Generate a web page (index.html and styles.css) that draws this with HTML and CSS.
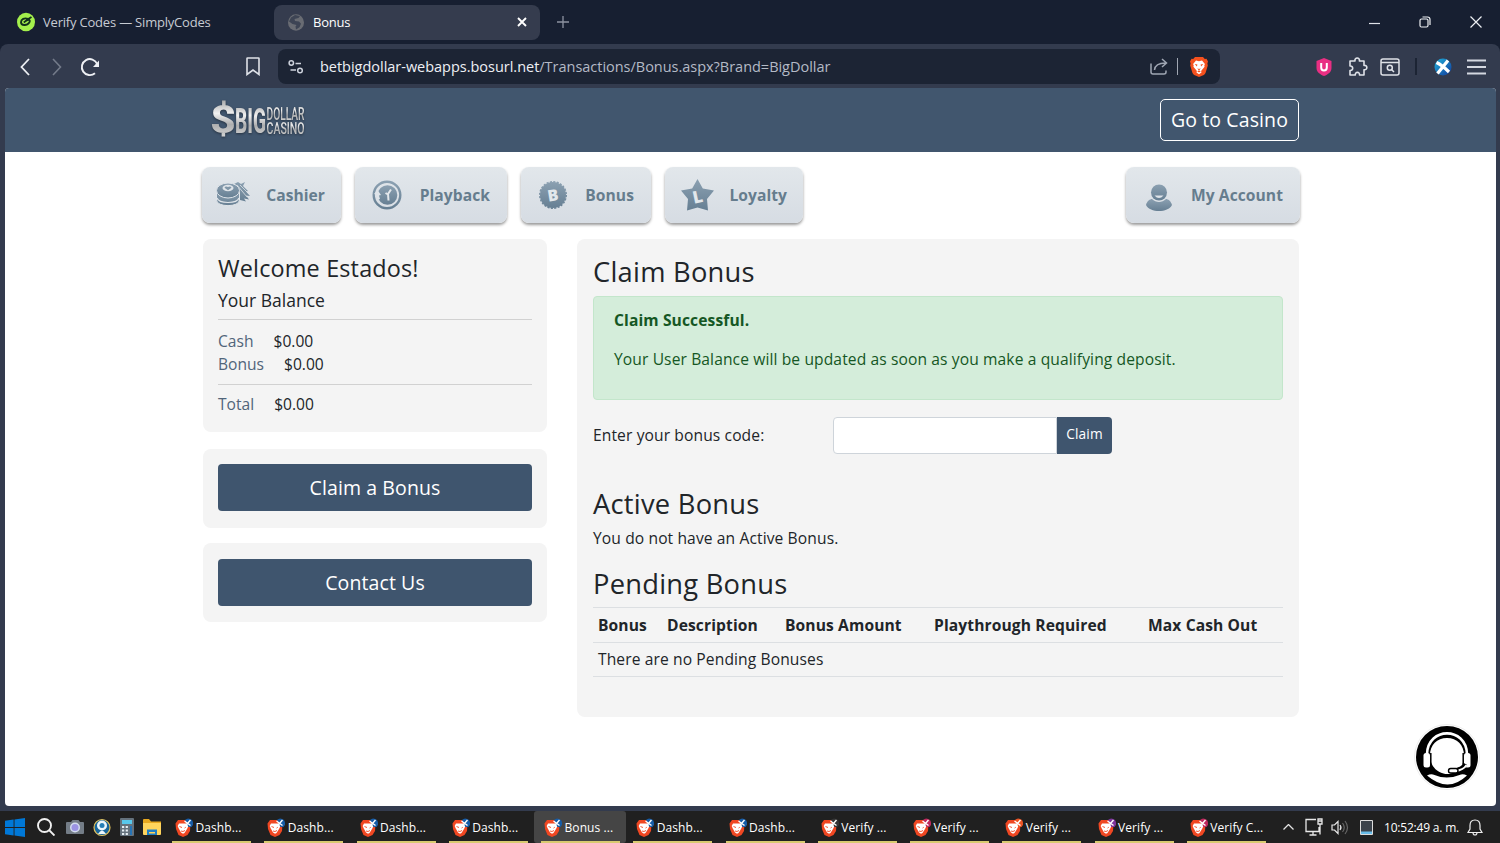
FILE: index.html
```html
<!DOCTYPE html>
<html lang="en">
<head>
  <meta charset="UTF-8" />
  <meta name="viewport" content="width=device-width, initial-scale=1.0"/>
  <title>Bonus</title>
  <link rel="stylesheet" href="styles.css">
</head>
<body>

  <!-- Shared icons -->
  <svg class="defs" width="0" height="0">
    <defs>
      <linearGradient id="silver" x1="0" y1="0" x2="0" y2="1">
        <stop offset="0" stop-color="#9c9e9f"/>
        <stop offset=".35" stop-color="#f1f1f1"/>
        <stop offset=".6" stop-color="#adaeaf"/>
        <stop offset="1" stop-color="#e2e2e2"/>
      </linearGradient>
      <linearGradient id="steel" x1="0" y1="0" x2="0" y2="1">
        <stop offset="0" stop-color="#8ba0b1"/>
        <stop offset="1" stop-color="#667f93"/>
      </linearGradient>
      <linearGradient id="blue" x1="0" y1="0" x2="1" y2="1">
        <stop offset="0" stop-color="#21b3dc"/>
        <stop offset="1" stop-color="#113a9c"/>
      </linearGradient>
      <symbol id="lion" viewBox="0 0 18 20">
        <path fill="#f4511e" d="M5 0h8l1.800 2 1.700-.2L18 4.600l-.6 1.800.4 2.200-2.200 7.200c-.3 1-1 1.600-1.800 2.200L9 20l-4.800-2C3.400 17.400 2.700 16.800 2.400 15.800L.2 8.600.6 6.400 0 4.600l1.500-2.800 1.700.2z"/>
        <path fill="#fff" d="M6 3.600l3 .6 3-.6 2.900 3.500-.6 1.400.3 1.300-3.500 4.100.4 1.500L9 17.300l-2.500-1.900.4-1.500L3.400 9.800l.3-1.300-.6-1.400z"/>
        <path fill="#f4511e" d="M4.700 7l2.700.6-.5 2zM13.300 7l-2.700.6.5 2zM7.300 11.300L9 12l1.700-.7L9 13.700zM7.200 14.300L9 13.500l1.800.8L9 15.400z"/>
      </symbol>
      <symbol id="task" viewBox="0 0 18 19">
        <path fill="#f04722" d="M3 2h9l3.500 3.500L15 13l-2.500 4L8 19l-4.500-2L1 11 .5 5.500z"/>
        <path fill="#fff" d="M4 5.500h8l1.500 2.500-1.500 3-2.500 4-1.500.8-2-1.300-2.500-4.500-.8-2z"/>
        <path stroke="#f04722" stroke-width=".9" fill="none" d="M4.500 8.500l2.500 1M11 9l-2 1M6 13l2 .5 2-1"/>
        <path fill="currentColor" d="M10 2Q13-1 17 2q2.500 4-.5 7L13.500 9z"/>
        <path stroke="#fff" stroke-width="1.400" d="M9.500 3l6 4.500M15.500 2L9 9.500"/>
      </symbol>
    </defs>
  </svg>

  <!-- Tabs -->
  <header class="tab-strip">
    <div class="tab">
      <svg class="tab-icon" width="18" height="20" viewBox="0 0 18 20"><ellipse cx="9" cy="10" rx="9" ry="9.300" fill="#a4f04c"/><path fill="none" stroke="#12301c" stroke-width="1.900" d="M11 6.800c-3.500-1.300-7 .4-7 3.400 0 3.500 6 4 8.300.3.900-1.400.4-2.700-.8-2.700-1.800 0-3.200 1.500-4.700 2.700M10.500 7.500l4-2.500"/></svg>
      <span class="tab-title">Verify Codes — SimplyCodes</span>
    </div>
    <div class="tab active">
      <svg class="tab-icon" width="16" height="17" viewBox="0 0 16 17"><ellipse cx="8" cy="8.500" rx="8" ry="8.300" fill="#696c73"/><path fill="#3d4454" d="M7 1l5 1-1.500 2-4 1 .5 2 4 .5 2 2.300-1.500 3.400-3.500 2.300-.5-3 1-1.500-4-1-3.500-2.500 2-4z"/></svg>
      <span class="tab-title">Bonus</span>
      <svg class="tab-close" width="10" height="10" viewBox="0 0 10 10"><path stroke="#fff" stroke-width="1.900" d="M1 1l8 8M9 1L1 9"/></svg>
    </div>
    <svg class="tab-new" width="12" height="12" viewBox="0 0 12 12"><path stroke="#8d93a0" stroke-width="1.300" d="M6 0v12M0 6h12"/></svg>
    <div class="window-buttons">
      <svg width="11" height="12" viewBox="0 0 11 12"><path stroke="#dfe2e8" stroke-width="1.200" d="M0 7.500h11"/></svg>
      <svg width="12" height="12" viewBox="0 0 12 12"><path fill="none" stroke="#eef0f4" stroke-width="1.200" d="M2.500 3h5q1.500 0 1.500 1.500v5q0 1.500-1.500 1.500h-5Q1 11 1 9.500v-5Q1 3 2.500 3zM3.500 1h5Q11 1 11 3.500v5.500"/></svg>
      <svg width="12" height="12" viewBox="0 0 12 12"><path stroke="#eef0f4" stroke-width="1.200" d="M.5.500l11 11M11.500.500l-11 11"/></svg>
    </div>
  </header>

  <!-- Toolbar -->
  <div class="toolbar">
    <div class="toolbar-left">
      <svg width="10" height="18" viewBox="0 0 10 18"><path fill="none" stroke="#eef0f4" stroke-width="1.800" d="M9 1L1.500 9 9 17"/></svg>
      <svg width="10" height="18" viewBox="0 0 10 18"><path fill="none" stroke="#747b8a" stroke-width="1.600" d="M1 1l7.500 8L1 17"/></svg>
      <svg class="reload" width="20" height="20" viewBox="0 0 20 20"><path fill="none" stroke="#eef0f4" stroke-width="1.900" d="M15 16.200A8 8 0 1 1 17.200 7"/><path fill="#eef0f4" d="M19 3.500v6.500h-6z"/></svg>
      <svg class="bookmark" width="14" height="19" viewBox="0 0 14 19"><path fill="none" stroke="#dfe2e8" stroke-width="1.600" d="M1.500 1h11q.5 0 .5.500V17.500L7 13l-6 4.500V1.500Q1 1 1.500 1z"/></svg>
    </div>
    <div class="address">
      <svg width="16" height="14" viewBox="0 0 16 14"><g fill="none" stroke="#cdd2dc" stroke-width="1.500"><circle cx="3.300" cy="3" r="2.200"/><path d="M7.500 3.500H13M2.500 10h5.500"/><circle cx="12" cy="10.500" r="2.300"/></g></svg>
      <span class="url">betbigdollar-webapps.bosurl.net<span class="path">/Transactions/Bonus.aspx?Brand=BigDollar</span></span>
      <svg class="share" width="18" height="17" viewBox="0 0 18 17"><path fill="none" stroke="#9fa6b3" stroke-width="1.500" d="M1 5.500V14q0 2 2 2h11q2 0 2-2v-1.500M4.500 12c.5-5 4-7 11-7M12 1l4.500 4L12 9"/></svg>
      <i class="divider"></i>
      <svg class="shield" width="18" height="20"><use href="#lion"/></svg>
    </div>
    <div class="toolbar-right">
      <svg width="16" height="18" viewBox="0 0 16 18"><path fill="#e92f83" d="M8 0l7.500 3v7c0 4-3.500 6.500-7.500 8-4-1.500-7.500-4-7.500-8V3z"/><path fill="none" stroke="#fff" stroke-width="2" d="M5.200 5v4.500q0 3 2.800 3t2.800-3V5"/></svg>
      <svg class="puzzle" width="20" height="20" viewBox="0 0 20 20"><path fill="none" stroke="#dfe2e8" stroke-width="1.600" stroke-linejoin="round" d="M2 4h5c-.8-4 5.200-4 4.400 0H16v4.500c3.800-.8 3.800 5 0 4.200V18h-4.500c.5-3.500-4.600-3.500-4.200 0H2v-4.500c3.600.5 3.600-5 0-4.500z"/></svg>
      <svg class="finder" width="20" height="18" viewBox="0 0 20 18"><g fill="none" stroke="#dfe2e8" stroke-width="1.500"><rect x="1" y="1" width="18" height="16" rx="2"/><path d="M1 4.500h18M11.500 11.500l2.500 2.500"/><circle cx="9.800" cy="9.700" r="2.500"/></g></svg>
      <i class="separator"></i>
      <svg class="profile" width="18" height="18" viewBox="0 0 18 18"><circle cx="9" cy="9" r="8.500" fill="url(#blue)"/><path stroke="#fff" stroke-width="3.200" fill="none" d="M2.500 4.500Q8 7 15 14M14 2.500L3.500 15.500"/></svg>
      <svg width="19" height="16" viewBox="0 0 19 16"><path stroke="#d4d8e0" stroke-width="1.800" d="M0 1.500h19M0 8h19M0 14.500h19"/></svg>
    </div>
  </div>

  <!-- Web page -->
  <main class="page">
    <div class="site-header">
      <svg class="logo" width="96" height="40" viewBox="0 0 96 40">
        <g class="logo-text" fill="url(#silver)">
          <text x="-2" y="33" font-size="38" textLength="26" lengthAdjust="spacingAndGlyphs">$</text>
          <text x="23" y="33" font-size="35" textLength="31" lengthAdjust="spacingAndGlyphs">BIG</text>
          <text class="thin" x="54.500" y="19.500" font-size="18" textLength="38" lengthAdjust="spacingAndGlyphs">DOLLAR</text>
          <text class="thin" x="54.500" y="34" font-size="17" textLength="38" lengthAdjust="spacingAndGlyphs">CASINO</text>
        </g>
      </svg>
      <a class="casino-button">Go to Casino</a>
    </div>

    <nav class="menu">
      <a class="menu-item cashier">
        <svg width="36" height="28" viewBox="0 0 36 28"><path fill="url(#steel)" d="M18 3l4-2 3 2 4-2-2 4 5 5-2 .5 4 4.500-4-.5 3 4-5-1 2 3-8-2z"/><path fill="none" stroke="#dfe4e9" stroke-width=".8" d="M21 4l10 12M24 4l8 8"/><g fill="url(#steel)" stroke="#dfe4e9" stroke-width="1"><path d="M.5 11v8c0 7.500 23 7.500 23 0v-8z"/><ellipse cx="12" cy="9.500" rx="11.500" ry="7.500"/></g><path fill="none" stroke="#dfe4e9" stroke-width="1.200" d="M1 17c2 6 20 6 22 0"/><ellipse cx="12" cy="7" rx="5.500" ry="3.300" fill="#dfe4e9"/><path fill="#8197a8" d="M12 9.300L8.500 6.700q1-2 3.500-.6 2.500-1.400 3.500.6z"/></svg>
        <span>Cashier</span>
      </a>
      <a class="menu-item playback">
        <svg width="30" height="30" viewBox="0 0 30 30"><circle cx="15" cy="15" r="13.300" fill="none" stroke="url(#steel)" stroke-width="2.400"/><circle cx="15.500" cy="15" r="9.800" fill="url(#steel)"/><path stroke="#e2e7eb" stroke-width="2" fill="none" d="M19 9.500l-3 4.500.5 6.500M16 14.500l-2.500-1.500"/><path fill="#dfe4e9" d="M2 14l3.500-4 3.500 5-2 .5 1 3.500-2.500 1-1.500-5.500z"/></svg>
        <span>Playback</span>
      </a>
      <a class="menu-item bonus">
        <svg width="28" height="28" viewBox="0 0 28 28"><circle cx="14" cy="14" r="13" fill="url(#steel)"/><circle cx="14" cy="14" r="13.200" fill="none" stroke="url(#steel)" stroke-width="1.600" stroke-dasharray="2.100 1.350"/><text class="badge" x="8.500" y="20" font-size="16" transform="rotate(-9 14 14)">B</text></svg>
        <span>Bonus</span>
      </a>
      <a class="menu-item loyalty">
        <svg width="33" height="32" viewBox="0 0 33 32"><path fill="url(#steel)" d="M16.500 0l5.300 9.500 11.200 2-7 8.500 1 11.500-10.500-3-10.500 3L7 20l-7-8.500 11.200-2z"/><text class="badge" x="11.500" y="24" font-size="17" transform="rotate(-12 16 17)">L</text></svg>
        <span>Loyalty</span>
      </a>
      <a class="menu-item account">
        <svg width="26" height="28" viewBox="0 0 26 28"><path fill="url(#steel)" d="M0 21c1-4 4-6 6-6 4 4 10 4 14 0 2 0 5 2 6 6-4 8-22 8-26 0z"/><circle cx="13" cy="8.500" r="8" fill="url(#steel)"/><path fill="#dfe4e9" d="M8.500 11.500h9q-4.500 5-9 0z"/></svg>
        <span>My Account</span>
      </a>
    </nav>

    <div class="columns">
      <aside class="sidebar">
        <section class="panel balance">
          <h2>Welcome Estados!</h2>
          <h3>Your Balance</h3>
          <hr>
          <p><span>Cash</span>$0.00</p>
          <p><span>Bonus</span>$0.00</p>
          <hr>
          <p><span>Total</span>$0.00</p>
        </section>
        <section class="panel action"><a class="wide-button">Claim a Bonus</a></section>
        <section class="panel action contact"><a class="wide-button">Contact Us</a></section>
      </aside>

      <section class="panel content">
        <h1>Claim Bonus</h1>
        <div class="alert">
          <strong>Claim Successful.</strong>
          <p>Your User Balance will be updated as soon as you make a qualifying deposit.</p>
        </div>
        <div class="claim-form">
          <label for="code">Enter your bonus code:</label>
          <input id="code" type="text">
          <button>Claim</button>
        </div>
        <h1>Active Bonus</h1>
        <p class="none-active">You do not have an Active Bonus.</p>
        <h1 class="pending">Pending Bonus</h1>
        <table>
          <tr><th class="c1">Bonus</th><th class="c2">Description</th><th class="c3">Bonus Amount</th><th class="c4">Playthrough Required</th><th class="c5">Max Cash Out</th></tr>
          <tr><td colspan="5">There are no Pending Bonuses</td></tr>
        </table>
      </section>
    </div>

    <svg class="support" width="66" height="66" viewBox="0 0 66 66">
      <circle cx="33" cy="33" r="32.500" fill="#fff" stroke="#eee"/>
      <circle cx="33" cy="33" r="31" fill="#000"/>
      <path fill="none" stroke="#fff" stroke-width="2.600" d="M13 30C14 2.500 52 2.500 53 30"/>
      <path fill="#fff" d="M33 14c10 0 17 7 17 17 0 5-1 9-3 12l-7 1.500c-7-1.500-8 5.500-1.500 5-2 .8-7 .8-9 0C20.500 47 16 40 16 31c0-10 7-17 17-17z"/>
      <rect x="9.500" y="29" width="6.500" height="14.500" rx="2.500" fill="#fff"/><rect x="50" y="29" width="6.500" height="14.500" rx="2.500" fill="#fff"/>
      <path fill="none" stroke="#000" stroke-width="1.500" d="M16.800 29v14M49.200 29v11"/>
      <path fill="none" stroke="#000" stroke-width="4" d="M51.500 40q-3 5-11 6.500"/>
      <path fill="none" stroke="#fff" stroke-width="1.800" d="M52.500 41q-3 5-11 6"/><rect x="34.500" y="44.500" width="9.500" height="4.500" rx="2.200" fill="#fff" stroke="#000" stroke-width="1.400"/>
      <path fill="#fff" d="M13 51.500q4-2 7.500-.5 12 5 25 0 3.500-1.500 7.500.5-19 18-40 0z"/>
    </svg>
  </main>

  <!-- Taskbar -->
  <footer class="taskbar">
    <div class="pinned">
      <svg width="20" height="19" viewBox="0 0 20 19"><path fill="#0078d7" d="M0 2.800L8.600 1.500V9H0zM9.500 1.400L20 0v9H9.500zM0 10h8.600v7.500L0 16.200zM9.500 10H20v9L9.500 17.600z"/></svg>
      <svg width="18" height="18" viewBox="0 0 18 18"><g fill="none" stroke="#f0f0f0" stroke-width="1.900"><circle cx="7.500" cy="7.500" r="6.500"/><path d="M12 12l5.500 5.500"/></g></svg>
      <svg width="18" height="16" viewBox="0 0 18 16"><path fill="#747d87" d="M1 3h4l1.500-2h6L14 3h3q1 0 1 1v10q0 1-1 1H1q-1 0-1-1V4q0-1 1-1z"/><circle cx="9" cy="8.500" r="5" fill="#d3dcef"/><circle cx="9" cy="8.500" r="3.500" fill="#9b93e2"/></svg>
      <svg width="18" height="19" viewBox="0 0 18 19"><circle cx="9" cy="9.500" r="8" fill="#17669c" stroke="#e1c15d" stroke-width="1.200"/><circle cx="9" cy="7.500" r="5" fill="#ecf7fd"/><circle cx="9" cy="7.500" r="2.500" fill="#247fb8"/><path fill="#ecf7fd" d="M5 16q4-7 8 0z"/></svg>
      <svg width="14" height="18" viewBox="0 0 14 18"><rect width="14" height="18" rx="1" fill="#65727d"/><path fill="#58c8ec" d="M2 2h10v4H2z"/><path stroke="#e6eef3" stroke-width="2" stroke-dasharray="2.200 1.500" d="M2 9h7M2 12.500h7M2 16h7"/><path fill="#2674b6" d="M10 8h2v9h-2z"/></svg>
      <svg width="18" height="16" viewBox="0 0 18 16"><path fill="#e8a81f" d="M0 1q0-1 1-1h5l2 2.500h10V6H0z"/><path fill="#ffd45c" d="M0 4h18v11q0 1-1 1H1q-1 0-1-1z"/><path fill="#1f7fc4" d="M4 10.500h10V16H4z"/><path fill="#ffd45c" d="M6 13h6v1.500H6z"/></svg>
    </div>
    <div class="tasks">
      <div class="task"><svg width="18" height="19"><use href="#task"/></svg>Dashb...</div>
      <div class="task"><svg width="18" height="19"><use href="#task"/></svg>Dashb...</div>
      <div class="task"><svg width="18" height="19"><use href="#task"/></svg>Dashb...</div>
      <div class="task"><svg width="18" height="19"><use href="#task"/></svg>Dashb...</div>
      <div class="task current"><svg width="18" height="19"><use href="#task"/></svg>Bonus ...</div>
      <div class="task"><svg width="18" height="19"><use href="#task"/></svg>Dashb...</div>
      <div class="task"><svg width="18" height="19"><use href="#task"/></svg>Dashb...</div>
      <div class="task dark"><svg width="18" height="19"><use href="#task"/></svg>Verify ...</div>
      <div class="task pink"><svg width="18" height="19"><use href="#task"/></svg>Verify ...</div>
      <div class="task orange"><svg width="18" height="19"><use href="#task"/></svg>Verify ...</div>
      <div class="task purple"><svg width="18" height="19"><use href="#task"/></svg>Verify ...</div>
      <div class="task pink"><svg width="18" height="19"><use href="#task"/></svg>Verify C...</div>
    </div>
    <div class="tray">
      <svg width="11" height="6" viewBox="0 0 11 6"><path fill="none" stroke="#e4e4e4" stroke-width="1.300" d="M.5 5.500l5-5 5 5"/></svg>
      <svg width="18" height="18" viewBox="0 0 18 18"><path fill="none" stroke="#e8e8e8" stroke-width="1.300" d="M11 1.500H1v12h13V9M4.500 17h7M8 13.500V17M13 1h4v5h-4zM15 6v10.500M13 3h4"/></svg>
      <svg class="volume" width="18" height="15" viewBox="0 0 18 15"><path fill="none" stroke="#e8e8e8" stroke-width="1.200" d="M1 5h2.500L7 1.500v12L3.500 10H1zM9 5q2 2.500 0 5"/><path fill="none" stroke="#666" stroke-width="1.200" d="M11.500 3q3.500 4.500 0 9M14 1q5 6.500 0 13"/></svg>
      <svg width="13" height="15" viewBox="0 0 13 15"><path fill="#3b424a" stroke="#dcdcdc" d="M.5.500h12v14H.5z"/><path fill="#68bce8" d="M1 11.500h11V14H1z"/></svg>
      <span class="clock">10:52:49 a. m.</span>
      <svg class="bell" width="16" height="17" viewBox="0 0 16 17"><path fill="none" stroke="#eee" stroke-width="1.200" d="M1 13.500h14L13 10V6.500q0-5.500-5-5.500T3 6.500V10zM6 13.500q0 2.500 2 2.500t2-2.500"/></svg>
    </div>
  </footer>

</body>
</html>
```
FILE: styles.css
```css
* {
  box-sizing: border-box;
}

body {
  margin: 0;
  width: 1500px;
  height: 843px;
  overflow: hidden;
  display: flex;
  flex-direction: column;
  background-color: #333b4e;
  color: #212529;
  font-family: "Open Sans", "Noto Sans", sans-serif;
}

svg {
  display: block;
  flex: none;
}

.defs {
  position: absolute;
}

/* Browser tabs */
.tab-strip {
  position: relative;
  z-index: 1;
  height: 44px;
  flex: none;
  display: flex;
  align-items: center;
  background-color: #171f31;
  padding: 0 18px 0 8px;
  font-size: 13px;
  color: #c7cbd3;
}

.tab {
  width: 266px;
  height: 35px;
  display: flex;
  align-items: center;
  padding: 0 13px 0 9px;
  border-radius: 8px;
}

.tab.active {
  background-color: #353c4e;
  color: #fff;
  padding-left: 14px;
}

.tab-icon {
  margin-right: 9px;
}

.tab:first-child .tab-icon {
  margin-right: 8px;
}

.tab-title {
  letter-spacing: -0.2px;
}

.tab-close {
  margin-left: auto;
}

.tab-new {
  margin-left: 17px;
}

.window-buttons {
  margin-left: auto;
  display: flex;
  gap: 39px;
}

/* Address bar */
.toolbar {
  height: 44px;
  flex: none;
  display: flex;
  align-items: center;
  background-color: #333b4e;
  border-radius: 8px 8px 0 0;
  padding: 1px 14px 0 20px;
  box-shadow: 0 -8px 0 #171f31;
}

.toolbar-left {
  display: flex;
  align-items: center;
  width: 258px;
  gap: 22px;
}

.reload {
  margin-left: -4px;
}

.bookmark {
  margin: 0 18px 0 auto;
}

.address {
  width: 942px;
  height: 35px;
  display: flex;
  align-items: center;
  background-color: #1c2434;
  border-radius: 8px;
  padding: 0 12px 0 10px;
}

.url {
  margin-left: 16px;
  font-size: 14.5px;
  letter-spacing: -0.02px;
  color: #eef0f4;
}

.path {
  color: #b4bac6;
}

.share {
  margin-left: auto;
}

.divider {
  width: 1px;
  height: 17px;
  margin: 0 12px 0 9px;
  background-color: #a0a6b2;
}

.toolbar-right {
  margin-left: auto;
  display: flex;
  align-items: center;
}

.puzzle {
  margin-left: 16px;
}

.finder {
  margin-left: 12px;
}

.separator {
  width: 2px;
  height: 17px;
  margin: 0 17px 0 15px;
  background-color: #1c2434;
}

.profile {
  margin-right: 15px;
}

/* Casino page */
.page {
  position: relative;
  height: 718px;
  flex: none;
  margin: 0 4px 0 5px;
  background-color: #fff;
  border-radius: 4px;
  overflow: hidden;
}

.site-header {
  height: 64px;
  display: flex;
  align-items: center;
  justify-content: space-between;
  padding: 0 197px 0 207px;
  background-color: #41566e;
}

.logo {
  overflow: visible;
}

.logo-text {
  font-family: "Roboto", sans-serif;
  font-weight: 800;
  filter: drop-shadow(0 1px 1px #273342);
}

.thin {
  font-weight: 500;
}

.casino-button {
  height: 42px;
  width: 139px;
  line-height: 39px;
  text-align: center;
  border: 1px solid #fff;
  border-radius: 5px;
  color: #fff;
  font-size: 19.5px;
  letter-spacing: 0.1px;
}

.menu {
  display: flex;
  gap: 14px;
  padding: 15px 196px 0 197px;
}

.menu-item {
  height: 56px;
  display: flex;
  align-items: center;
  justify-content: space-between;
  border-radius: 8px;
  background-image: linear-gradient(#e2e7eb, #d6dce3);
  box-shadow: 0 2px 3px rgba(0, 0, 0, 0.4);
  color: #667d8e;
  font-size: 15.6px;
  font-weight: 700;
  padding: 0 16px 0 14px;
}

.menu-item span {
  padding-bottom: 1px;
  letter-spacing: 0.06px;
}

.cashier { width: 139px; }
.playback { width: 152px; padding: 0 17px 0 17px; }
.bonus { width: 130px; padding: 0 17px 0 18px; }
.loyalty { width: 138px; padding-left: 16px; }
.account { width: 174px; padding: 0 17px 0 20px; margin-left: auto; }

.account svg {
  margin-top: 6px;
}

.badge {
  fill: #e2e7eb;
  font-family: "Open Sans", sans-serif;
  font-weight: 800;
}

.columns {
  display: flex;
  align-items: flex-start;
  gap: 30px;
  padding: 16px 197px 0 198px;
}

.panel {
  background-color: #f4f4f4;
  border-radius: 8px;
}

.sidebar {
  width: 344px;
  flex: none;
  display: flex;
  flex-direction: column;
}

.balance {
  height: 193px;
  padding: 13px 15px 0;
  margin-bottom: 17px;
}

h1, h2, h3, p {
  margin: 0;
  font-weight: 400;
}

h2 {
  font-size: 23.4px;
  line-height: 32px;
  letter-spacing: 0.17px;
}

h3 {
  font-size: 17.5px;
  line-height: 32px;
}

.balance hr {
  height: 1px;
  border: 0;
  margin: 3px 0 10px;
  background-color: #d1d1d1;
}

.balance p {
  font-size: 15.6px;
  line-height: 23px;
}

.balance p + hr {
  margin: 8px 0 8px;
}

.balance span {
  margin-right: 20px;
  color: #51657a;
}

.action {
  height: 79px;
  padding: 15px;
  margin-bottom: 15px;
}

.contact {
  padding-top: 16px;
}

.wide-button {
  display: block;
  height: 47px;
  line-height: 48px;
  text-align: center;
  border-radius: 4px;
  background-color: #3f556e;
  color: #fff;
  font-size: 19.5px;
  letter-spacing: 0.1px;
}

.content {
  width: 722px;
  height: 478px;
  padding: 16px 16px 0;
  font-size: 15.6px;
  letter-spacing: 0.11px;
}

h1 {
  font-size: 27.3px;
  line-height: 33px;
  letter-spacing: 0.25px;
}

.alert {
  height: 104px;
  margin: 8px 0 17px;
  padding: 12px 20px;
  border: 1px solid #c3e6cb;
  border-radius: 4px;
  background-color: #d4edda;
  color: #155724;
  line-height: 23px;
}

.alert p {
  margin-top: 16px;
}

.claim-form {
  display: flex;
  align-items: center;
  margin-bottom: 33px;
}

.claim-form label {
  width: 240px;
  padding-bottom: 1px;
}

.claim-form input {
  width: 224px;
  height: 37px;
  border: 1px solid #ced4da;
  border-radius: 4px 0 0 4px;
  background-color: #fff;
}

.claim-form button {
  width: 55px;
  height: 37px;
  border: 0;
  border-radius: 0 4px 4px 0;
  padding: 0 0 4px;
  background-color: #3f556e;
  color: #fff;
  font-family: inherit;
  font-size: 13.7px;
  letter-spacing: 0.1px;
}

.none-active {
  line-height: 23px;
  margin: 7px 0 17px;
}

.pending {
  margin-bottom: 7px;
}

table {
  width: 690px;
  border-collapse: collapse;
  table-layout: fixed;
}

th, td {
  height: 35px;
  padding: 0 5px 0;
  border-top: 1px solid #dcdfe2;
  border-bottom: 1px solid #dcdfe2;
  text-align: left;
  white-space: nowrap;
}

td {
  height: 34px;
  padding-bottom: 1px;
}

.c1 { width: 69px; }
.c2 { width: 118px; }
.c3 { width: 149px; }
.c4 { width: 214px; }

.support {
  position: absolute;
  right: 16px;
  bottom: 16px;
}

/* Windows taskbar */
.taskbar {
  height: 32px;
  flex: none;
  margin-top: 5px;
  display: flex;
  align-items: center;
  background-color: #202020;
  color: #fff;
  font-size: 12px;
}

.pinned {
  width: 165px;
  display: flex;
  align-items: center;
  padding-left: 5px;
  gap: 9px;
}

.pinned svg:nth-child(2) {
  margin: 0 2px 0 3px;
}

.tasks {
  display: flex;
}

.task {
  width: 92.25px;
  flex: none;
  height: 32px;
  display: flex;
  align-items: center;
  color: #fff;
  padding: 0 0 0 10px;
  background: linear-gradient(#d8ca70, #d8ca70) 7px 100% / 79px 2px no-repeat;
  white-space: nowrap;
  letter-spacing: 0.08px;
}

.task svg {
  color: #165ca7;
  margin-right: 2.5px;
}

.task.current {
  background-color: #454545;
  border-radius: 3px;
}

.task.dark svg { color: #343434; }
.task.pink svg { color: #bf285d; }
.task.orange svg { color: #ec5424; }
.task.purple svg { color: #7d359c; }

.tray {
  display: flex;
  align-items: center;
  gap: 11px;
  margin-left: auto;
  padding-right: 17px;
}

.volume {
  margin-left: -3px;
}

.clock {
  letter-spacing: -0.2px;
}

.bell {
  margin-left: -3px;
}
```
